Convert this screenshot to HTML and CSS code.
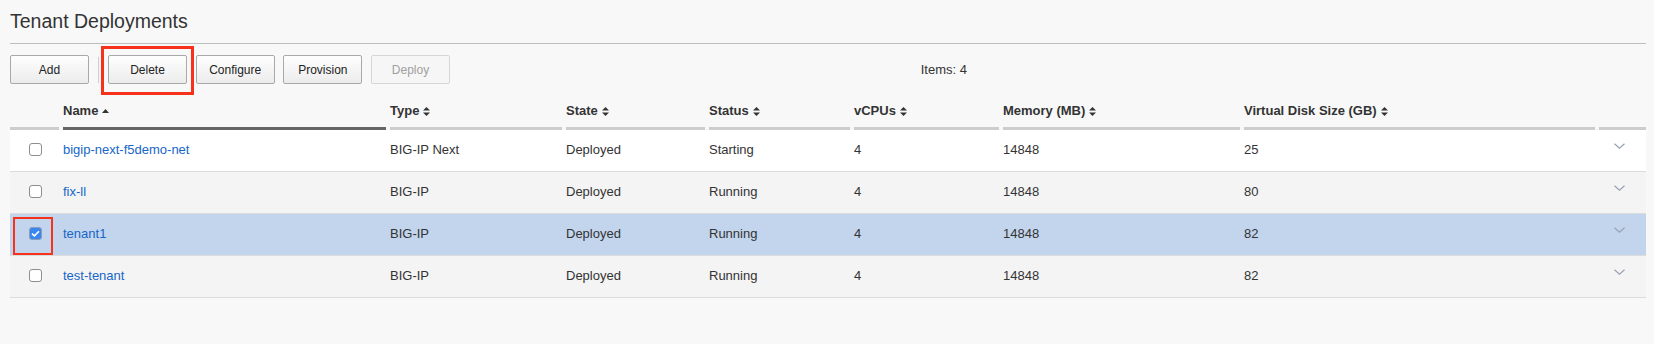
FILE: index.html
```html
<!DOCTYPE html>
<html lang="en">
<head>
<meta charset="utf-8">
<title>Tenant Deployments</title>
<link rel="stylesheet" href="styles.css">
</head>
<body>
<div class="page">
  <h1 class="title">Tenant Deployments</h1>

  <div class="toolbar">
    <button class="btn">Add</button>
    <span class="sep"></span>
    <span class="btn-wrap">
      <button class="btn">Delete</button>
      <span class="mark mark-delete"></span>
    </span>
    <button class="btn">Configure</button>
    <button class="btn">Provision</button>
    <button class="btn" disabled>Deploy</button>
    <span class="items">Items: 4</span>
  </div>

  <div class="grid head">
    <div class="hc"></div>
    <div class="hc active">Name <svg class="sort" width="7" height="4" viewBox="0 0 7 4"><polygon points="0,4 3.5,0 7,4" fill="#333"/></svg></div>
    <div class="hc">Type <svg class="sort" width="7" height="9" viewBox="0 0 7 9"><polygon points="0,3.6 3.5,0 7,3.6" fill="#333"/><polygon points="0,5.4 3.5,9 7,5.4" fill="#333"/></svg></div>
    <div class="hc">State <svg class="sort" width="7" height="9" viewBox="0 0 7 9"><polygon points="0,3.6 3.5,0 7,3.6" fill="#333"/><polygon points="0,5.4 3.5,9 7,5.4" fill="#333"/></svg></div>
    <div class="hc">Status <svg class="sort" width="7" height="9" viewBox="0 0 7 9"><polygon points="0,3.6 3.5,0 7,3.6" fill="#333"/><polygon points="0,5.4 3.5,9 7,5.4" fill="#333"/></svg></div>
    <div class="hc">vCPUs <svg class="sort" width="7" height="9" viewBox="0 0 7 9"><polygon points="0,3.6 3.5,0 7,3.6" fill="#333"/><polygon points="0,5.4 3.5,9 7,5.4" fill="#333"/></svg></div>
    <div class="hc">Memory (MB) <svg class="sort" width="7" height="9" viewBox="0 0 7 9"><polygon points="0,3.6 3.5,0 7,3.6" fill="#333"/><polygon points="0,5.4 3.5,9 7,5.4" fill="#333"/></svg></div>
    <div class="hc">Virtual Disk Size (GB) <svg class="sort" width="7" height="9" viewBox="0 0 7 9"><polygon points="0,3.6 3.5,0 7,3.6" fill="#333"/><polygon points="0,5.4 3.5,9 7,5.4" fill="#333"/></svg></div>
    <div class="hc"></div>
  </div>

  <div class="grid row r-white">
    <div class="cell cb"><span class="check"></span></div>
    <div class="cell"><a class="link" href="#">bigip-next-f5demo-net</a></div>
    <div class="cell">BIG-IP Next</div>
    <div class="cell">Deployed</div>
    <div class="cell">Starting</div>
    <div class="cell">4</div>
    <div class="cell">14848</div>
    <div class="cell">25</div>
    <div class="cell chev"><svg width="11" height="6" viewBox="0 0 11 6"><polyline points="0.5,0.7 5.5,5.2 10.5,0.7" fill="none" stroke="#98a1b3" stroke-width="1.2"/></svg></div>
  </div>

  <div class="grid row r-grey">
    <div class="cell cb"><span class="check"></span></div>
    <div class="cell"><a class="link" href="#">fix-ll</a></div>
    <div class="cell">BIG-IP</div>
    <div class="cell">Deployed</div>
    <div class="cell">Running</div>
    <div class="cell">4</div>
    <div class="cell">14848</div>
    <div class="cell">80</div>
    <div class="cell chev"><svg width="11" height="6" viewBox="0 0 11 6"><polyline points="0.5,0.7 5.5,5.2 10.5,0.7" fill="none" stroke="#98a1b3" stroke-width="1.2"/></svg></div>
  </div>

  <div class="grid row r-sel">
    <div class="cell cb"><span class="check on"><svg width="9" height="7" viewBox="0 0 9 7"><polyline points="1,3.6 3.4,5.8 8,1.2" fill="none" stroke="#fff" stroke-width="1.6"/></svg></span><span class="mark mark-check"></span></div>
    <div class="cell"><a class="link" href="#">tenant1</a></div>
    <div class="cell">BIG-IP</div>
    <div class="cell">Deployed</div>
    <div class="cell">Running</div>
    <div class="cell">4</div>
    <div class="cell">14848</div>
    <div class="cell">82</div>
    <div class="cell chev"><svg width="11" height="6" viewBox="0 0 11 6"><polyline points="0.5,0.7 5.5,5.2 10.5,0.7" fill="none" stroke="#98a1b3" stroke-width="1.2"/></svg></div>
  </div>

  <div class="grid row r-grey">
    <div class="cell cb"><span class="check"></span></div>
    <div class="cell"><a class="link" href="#">test-tenant</a></div>
    <div class="cell">BIG-IP</div>
    <div class="cell">Deployed</div>
    <div class="cell">Running</div>
    <div class="cell">4</div>
    <div class="cell">14848</div>
    <div class="cell">82</div>
    <div class="cell chev"><svg width="11" height="6" viewBox="0 0 11 6"><polyline points="0.5,0.7 5.5,5.2 10.5,0.7" fill="none" stroke="#98a1b3" stroke-width="1.2"/></svg></div>
  </div>
</div>
</body>
</html>
```

FILE: styles.css
```css
html, body {
  margin: 0;
  padding: 0;
  background: #f8f8f8;
}

body {
  font-family: "Liberation Sans", Arial, Helvetica, sans-serif;
  color: #333;
  font-size: 13px;
}

.page {
  padding: 0 8px 0 10px;
}

.title {
  margin: 0;
  padding: 9px 0 10px;
  font-size: 19.5px;
  line-height: 24px;
  font-weight: normal;
  color: #333;
  border-bottom: 1px solid #bdbdbd;
}

.toolbar {
  display: flex;
  align-items: center;
  margin-top: 11px;
  height: 29px;
}

.btn {
  box-sizing: border-box;
  width: 79px;
  height: 29px;
  margin: 0 8.7px 0 0;
  padding: 0;
  font-family: inherit;
  font-size: 12px;
  color: #222;
  background: linear-gradient(#fefefe, #ececec);
  border: 1px solid #a9a9a9;
  border-radius: 2px;
}

.btn:disabled {
  color: #a0a0a0;
  background: #f6f6f6;
  border-color: #d6d6d6;
}

.sep {
  width: 1px;
  height: 26px;
  background: #cfcfcf;
  margin: 0 9px 0 0.3px;
}

.btn-wrap {
  position: relative;
  display: flex;
  margin-right: 8.7px;
}

.btn-wrap .btn {
  margin: 0;
}

.mark {
  position: absolute;
  border: 3px solid #f7321c;
  pointer-events: none;
}

.mark-delete {
  top: -9px;
  bottom: -11px;
  left: -7px;
  right: -7px;
}

.items {
  margin-left: 462px;
  font-size: 13px;
  color: #333;
}

.grid {
  display: grid;
  grid-template-columns: 49px 323px 172px 139px 141px 145px 237px 351px 47px;
  column-gap: 4px;
}

.head {
  margin-top: 19px;
}

.hc {
  display: flex;
  align-items: center;
  gap: 4px;
  height: 16px;
  padding-bottom: 8px;
  border-bottom: 3px solid #cdcdcd;
  font-weight: bold;
  font-size: 13px;
  line-height: 16px;
  color: #333;
  white-space: nowrap;
}

.hc.active {
  border-bottom-color: #666;
}

.sort {
  display: block;
}

.row {
  height: 41px;
  border-bottom: 1px solid #dcdcdc;
}

.r-white { background: #fff; }
.r-grey { background: #f4f4f4; }
.r-sel { background: #c2d5ed; }

.cell {
  box-sizing: border-box;
  display: flex;
  align-items: center;
  padding-bottom: 2px;
  font-size: 13px;
  color: #333;
  white-space: nowrap;
}

.cb {
  position: relative;
  padding-left: 19px;
  padding-bottom: 0;
}

.check {
  box-sizing: border-box;
  display: flex;
  align-items: center;
  justify-content: center;
  width: 13px;
  height: 13px;
  margin-top: -2px;
  border: 1px solid #8e8e8e;
  border-radius: 3px;
  background: #fff;
}

.check.on {
  background: #3a87f2;
  border-color: #8d9cb3;
}

.mark-check {
  top: 3px;
  bottom: 0;
  left: 3px;
  right: 6px;
  border-width: 2px;
}

.link {
  color: #1766c8;
  text-decoration: none;
}

.chev {
  align-items: flex-start;
  padding-top: 13px;
  padding-left: 15px;
  padding-bottom: 0;
}

.chev svg {
  display: block;
}
```
